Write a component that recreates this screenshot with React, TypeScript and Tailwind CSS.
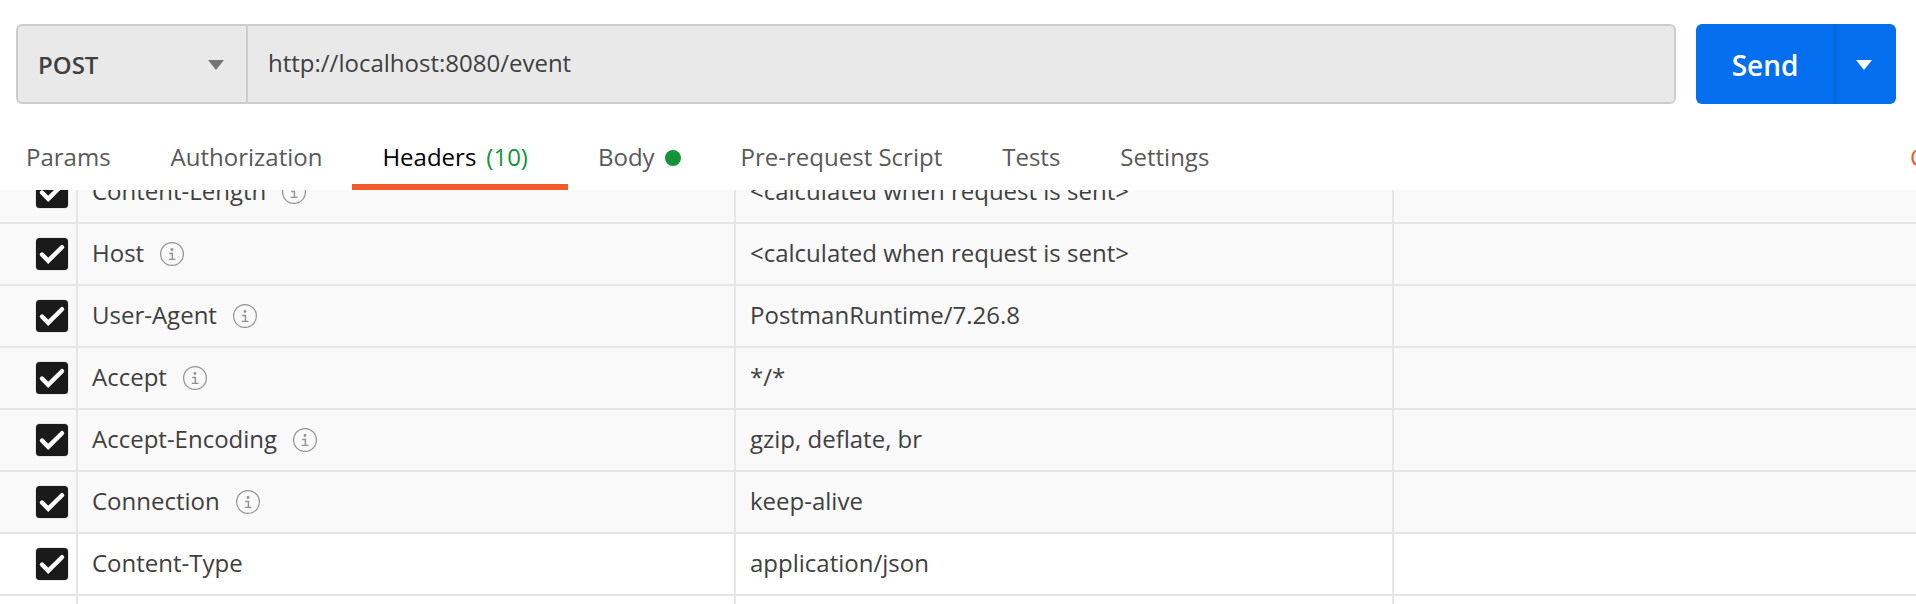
import React from "react";

type Header = { name: string; value: string; auto: boolean };

const headers: Header[] = [
  { name: "Content-Length", value: "<calculated when request is sent>", auto: true },
  { name: "Host", value: "<calculated when request is sent>", auto: true },
  { name: "User-Agent", value: "PostmanRuntime/7.26.8", auto: true },
  { name: "Accept", value: "*/*", auto: true },
  { name: "Accept-Encoding", value: "gzip, deflate, br", auto: true },
  { name: "Connection", value: "keep-alive", auto: true },
  { name: "Content-Type", value: "application/json", auto: false },
];

function Caret({ className }: { className: string }) {
  return (
    <svg width="16" height="10" viewBox="0 0 16 10" className={className}>
      <path d="M0 0H16L8 10Z" fill="currentColor" />
    </svg>
  );
}

function Checkbox() {
  return (
    <svg width="34" height="34" viewBox="-1 -1 34 34" className="shrink-0">
      <rect x="-1" y="-1" width="34" height="34" rx="5" fill="#e6e6e6" />
      <rect width="32" height="32" rx="3.5" fill="#1a1a1a" />
      <path
        d="M6 16.5L12.2 22.8L26 9.2"
        fill="none"
        stroke="#fff"
        strokeWidth="4.4"
        strokeLinecap="round"
        strokeLinejoin="miter"
      />
    </svg>
  );
}

function InfoIcon() {
  return (
    <svg width="24" height="24" viewBox="0 0 24 24" className="ml-4 shrink-0 text-[#919191]">
      <circle cx="12" cy="12" r="11.4" fill="none" stroke="currentColor" strokeWidth="1.2" />
      <circle cx="12" cy="7.5" r="1.4" fill="currentColor" />
      <path d="M9.2 11.5H12.4V17.3M8.8 17.4H15.4" fill="none" stroke="currentColor" strokeWidth="1.4" />
    </svg>
  );
}

function Tab({ children, active }: { children: React.ReactNode; active?: boolean }) {
  return (
    <div
      className={
        active
          ? "flex h-full items-center border-b-[6px] border-[#f15a29] pl-[30px] pr-10 pt-1.5 text-black"
          : "flex h-full items-center border-b-[6px] border-transparent px-[30px] pt-1.5"
      }
    >
      {children}
    </div>
  );
}

export default function App() {
  return (
    <div className="flex h-[604px] w-[1916px] flex-col overflow-hidden bg-white font-['Open_Sans',sans-serif] text-[24px] leading-8 text-[#404040]">
      <div className="flex h-20 shrink-0 mt-6 pl-4 pr-5">
        <div className="flex flex-1 rounded-md border-2 border-[#cdcdcd] bg-[#e9e9e9]">
          <div className="flex w-[230px] items-center justify-between border-r-2 border-[#cdcdcd] pl-5 pr-[22px]">
            <span className="pt-0.5 font-semibold">POST</span>
            <Caret className="mt-0.5 text-[#757575]" />
          </div>
          <div className="flex items-center pb-0.5 pl-5">http://localhost:8080/event</div>
        </div>
        <button className="ml-5 flex w-[200px] overflow-hidden rounded-md bg-[#036eee] text-white">
          <span className="flex h-full w-[138px] items-center justify-center pt-0.5 text-[28px] font-semibold">Send</span>
          <span className="flex h-full flex-1 items-center justify-center border-l-2 border-[#0765d8] pr-1">
            <Caret className="mt-0.5" />
          </span>
        </button>
      </div>

      <div className="flex h-[86px] shrink-0 items-stretch overflow-hidden pt-5 text-[#595959]">
        <div className="-ml-1 flex">
          <Tab>Params</Tab>
          <Tab>Authorization</Tab>
          <Tab active>
            Headers<span className="ml-2.5 text-[#0f9539]">(10)</span>
          </Tab>
          <Tab>
            Body<span className="ml-2.5 mt-0.5 size-4 rounded-full bg-[#159338]" />
          </Tab>
          <Tab>Pre-request Script</Tab>
          <Tab>Tests</Tab>
          <Tab>Settings</Tab>
        </div>
        <div className="ml-auto flex w-[6px] items-center overflow-hidden whitespace-nowrap text-[#f15a29]">
          Cookies
        </div>
      </div>

      <div className="flex flex-1 flex-col justify-end overflow-hidden">
        {headers.map((h) => (
          <div
            key={h.name}
            className={
              h.auto
                ? "flex h-[62px] shrink-0 border-b-2 border-[#e6e6e6] bg-[#f9f9f9]"
                : "flex h-[62px] shrink-0 border-b-2 border-[#e6e6e6] bg-white"
            }
          >
            <div className="flex w-[78px] items-center border-r-2 border-[#e6e6e6] pl-[35px]">
              <Checkbox />
            </div>
            <div className="flex w-[658px] items-center border-r-2 border-[#e6e6e6] pl-3.5">
              <span className="pb-0.5">{h.name}</span>
              {h.auto && <InfoIcon />}
            </div>
            <div className="flex w-[658px] items-center border-r-2 border-[#e6e6e6] pb-0.5 pl-3.5">{h.value}</div>
          </div>
        ))}
        <div className="flex h-2 shrink-0">
          <div className="w-[78px] border-r-2 border-[#e6e6e6]" />
          <div className="w-[658px] border-r-2 border-[#e6e6e6]" />
          <div className="w-[658px] border-r-2 border-[#e6e6e6]" />
        </div>
      </div>
    </div>
  );
}
